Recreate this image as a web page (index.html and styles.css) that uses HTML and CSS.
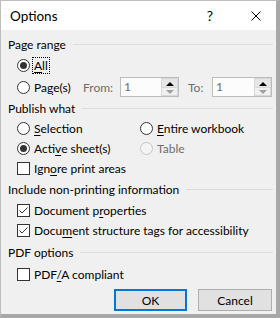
FILE: index.html
```html
<!DOCTYPE html>
<html lang="en">
<head>
    <meta charset="UTF-8">
    <meta name="viewport" content="width=device-width, initial-scale=1.0">
    <title>Options</title>
    <link rel="stylesheet" href="styles.css">
</head>
<body>
    <div class="dialog">
        <div class="titlebar">
            <span class="title">Options</span>
            <span class="help">?</span>
            <svg class="close" width="10" height="10" viewBox="0 0 10 10">
                <path d="M0.5 0.5 L9.5 9.5 M9.5 0.5 L0.5 9.5" stroke="#000" stroke-width="1"/>
            </svg>
        </div>

        <div class="content">
            <div class="group-title"><span>Page range</span></div>

            <div class="row row-all">
                <label class="radio">
                    <svg width="13" height="13" viewBox="0 0 13 13"><circle cx="6.5" cy="6.5" r="6" fill="#fff" stroke="#333"/><circle cx="6.5" cy="6.5" r="3.5" fill="#333"/></svg>
                    <span class="focus"><u>A</u>ll</span>
                </label>
            </div>

            <div class="row row-pages">
                <label class="radio pages-option">
                    <svg width="13" height="13" viewBox="0 0 13 13"><circle cx="6.5" cy="6.5" r="6" fill="#fff" stroke="#333"/></svg>
                    <span>Pa<u>g</u>e(s)</span>
                </label>
                <span class="muted from-label">From:</span>
                <div class="spin spin-from">
                    <span class="spin-value">1</span>
                    <div class="spin-buttons">
                        <span class="spin-up"></span>
                        <span class="spin-down"></span>
                    </div>
                </div>
                <span class="muted to-label">To:</span>
                <div class="spin spin-to">
                    <span class="spin-value">1</span>
                    <div class="spin-buttons">
                        <span class="spin-up"></span>
                        <span class="spin-down"></span>
                    </div>
                </div>
            </div>

            <div class="group-title"><span>Publish what</span></div>

            <div class="row row-selection two-col">
                <label class="radio">
                    <svg width="13" height="13" viewBox="0 0 13 13"><circle cx="6.5" cy="6.5" r="6" fill="#fff" stroke="#333"/></svg>
                    <span><u>S</u>election</span>
                </label>
                <label class="radio">
                    <svg width="13" height="13" viewBox="0 0 13 13"><circle cx="6.5" cy="6.5" r="6" fill="#fff" stroke="#333"/></svg>
                    <span><u>E</u>ntire workbook</span>
                </label>
            </div>

            <div class="row row-active two-col">
                <label class="radio">
                    <svg width="13" height="13" viewBox="0 0 13 13"><circle cx="6.5" cy="6.5" r="6" fill="#fff" stroke="#333"/><circle cx="6.5" cy="6.5" r="3.5" fill="#333"/></svg>
                    <span>Acti<u>v</u>e sheet(s)</span>
                </label>
                <label class="radio disabled">
                    <svg width="13" height="13" viewBox="0 0 13 13"><circle cx="6.5" cy="6.5" r="6" fill="#f4f4f4" stroke="#c4c4c4"/></svg>
                    <span>Table</span>
                </label>
            </div>

            <div class="row row-ignore">
                <label class="check">
                    <svg width="13" height="13" viewBox="0 0 13 13"><rect x="0.5" y="0.5" width="12" height="12" fill="#fff" stroke="#333"/></svg>
                    <span>Ign<u>o</u>re print areas</span>
                </label>
            </div>

            <div class="group-title group-include"><span>Include non-printing information</span></div>

            <div class="row row-props">
                <label class="check">
                    <svg width="13" height="13" viewBox="0 0 13 13"><rect x="0.5" y="0.5" width="12" height="12" fill="#fff" stroke="#333"/><path d="M2.5 6.5 L5 9 L10.5 3.5" fill="none" stroke="#333" stroke-width="1"/></svg>
                    <span>Document p<u>r</u>operties</span>
                </label>
            </div>

            <div class="row row-tags">
                <label class="check">
                    <svg width="13" height="13" viewBox="0 0 13 13"><rect x="0.5" y="0.5" width="12" height="12" fill="#fff" stroke="#333"/><path d="M2.5 6.5 L5 9 L10.5 3.5" fill="none" stroke="#333" stroke-width="1"/></svg>
                    <span>Docu<u>m</u>ent structure tags for accessibility</span>
                </label>
            </div>

            <div class="group-title group-pdf"><span>PDF options</span></div>

            <div class="row row-pdfa">
                <label class="check">
                    <svg width="13" height="13" viewBox="0 0 13 13"><rect x="0.5" y="0.5" width="12" height="12" fill="#fff" stroke="#333"/></svg>
                    <span>PDF<u>/</u>A compliant</span>
                </label>
            </div>

            <div class="actions">
                <button class="btn btn-default">OK</button>
                <button class="btn">Cancel</button>
            </div>
        </div>
    </div>
</body>
</html>
```

FILE: styles.css
```css
* {
    margin: 0;
    padding: 0;
    box-sizing: border-box;
}

body {
    font-family: "Segoe UI", Lato, "Noto Sans", sans-serif;
    font-size: 12px;
    color: #000;
    background: #fff;
}

.dialog {
    width: 280px;
    height: 318px;
    border-top: 1px solid #bdbdbd;
    border-left: 1px solid #bdbdbd;
    border-right: 4px solid #a8a8a8;
    border-bottom: 4px solid #a8a8a8;
    display: flex;
    flex-direction: column;
}

.titlebar {
    height: 29px;
    background: #fff;
    display: flex;
    align-items: center;
    padding-left: 9px;
}

.title {
    font-size: 13.5px;
    flex: 1;
}

.help {
    font-size: 14px;
    margin-right: 38px;
}

.close {
    margin-right: 15px;
}

.content {
    flex: 1;
    background: #f0f0f0;
    padding: 4px 3px 0 7px;
    display: flex;
    flex-direction: column;
}

.group-title {
    height: 20px;
    display: flex;
    align-items: center;
    gap: 7px;
}

.group-title::after {
    content: "";
    flex: 1;
    height: 1px;
    background: #dcdcdc;
}

.group-include,
.group-pdf {
    height: 23px;
}

.row {
    display: flex;
    align-items: center;
    padding-left: 9px;
}

.row-all { height: 22px; }
.row-pages { height: 22px; }
.row-selection { height: 21px; }
.row-active { height: 19px; }
.row-ignore { height: 20px; }
.row-props { height: 19px; }
.row-tags { height: 21px; }
.row-pdfa { height: 20px; }

.two-col .radio:first-child {
    width: 123px;
}

.radio,
.check {
    display: flex;
    align-items: center;
    gap: 4px;
}

.radio svg,
.check svg {
    flex: none;
}

u {
    text-underline-offset: 2px;
}

.focus {
    outline: 1px dotted #000;
    outline-offset: 0;
    padding: 0 1px;
    margin-left: -1px;
}

.disabled,
.muted {
    color: #6d6d6d;
}

/* fixed columns so the spin boxes land where the dialog puts them */
.pages-option {
    width: 66px;
}

.from-label {
    width: 37px;
}

.spin {
    height: 20px;
    border: 1px solid #bcbcbc;
    background: #fcfcfc;
    display: flex;
}

.spin-from {
    width: 59px;
}

.to-label {
    width: 24px;
    margin-left: 9px;
}

.spin-to {
    width: 60px;
}

.spin-value {
    flex: 1;
    color: #6d6d6d;
    padding-left: 3px;
    line-height: 18px;
}

.spin-buttons {
    width: 17px;
    display: flex;
    flex-direction: column;
}

.spin-up,
.spin-down {
    flex: 1;
    position: relative;
    border: 1px solid #d8d8d8;
    background: #e6e6e6;
}

.spin-down {
    background: #f0f0f0;
    border-top: none;
}

.spin-up::after,
.spin-down::after {
    content: "";
    position: absolute;
    left: 4px;
    top: 3px;
    border-left: 4px solid transparent;
    border-right: 4px solid transparent;
}

.spin-up::after {
    border-bottom: 4px solid #000;
}

.spin-down::after {
    top: 2px;
    border-top: 4px solid #a0a0a0;
}

.actions {
    margin-top: 5px;
    display: flex;
    justify-content: flex-end;
    gap: 11px;
    padding-right: 1px;
}

.btn {
    font-family: inherit;
    font-size: 12px;
    color: #000;
    width: 74px;
    height: 22px;
    background: #e1e1e1;
    border: 1px solid #adadad;
}

.btn-default {
    width: 73px;
    border: 2px solid #0078d7;
}
```
